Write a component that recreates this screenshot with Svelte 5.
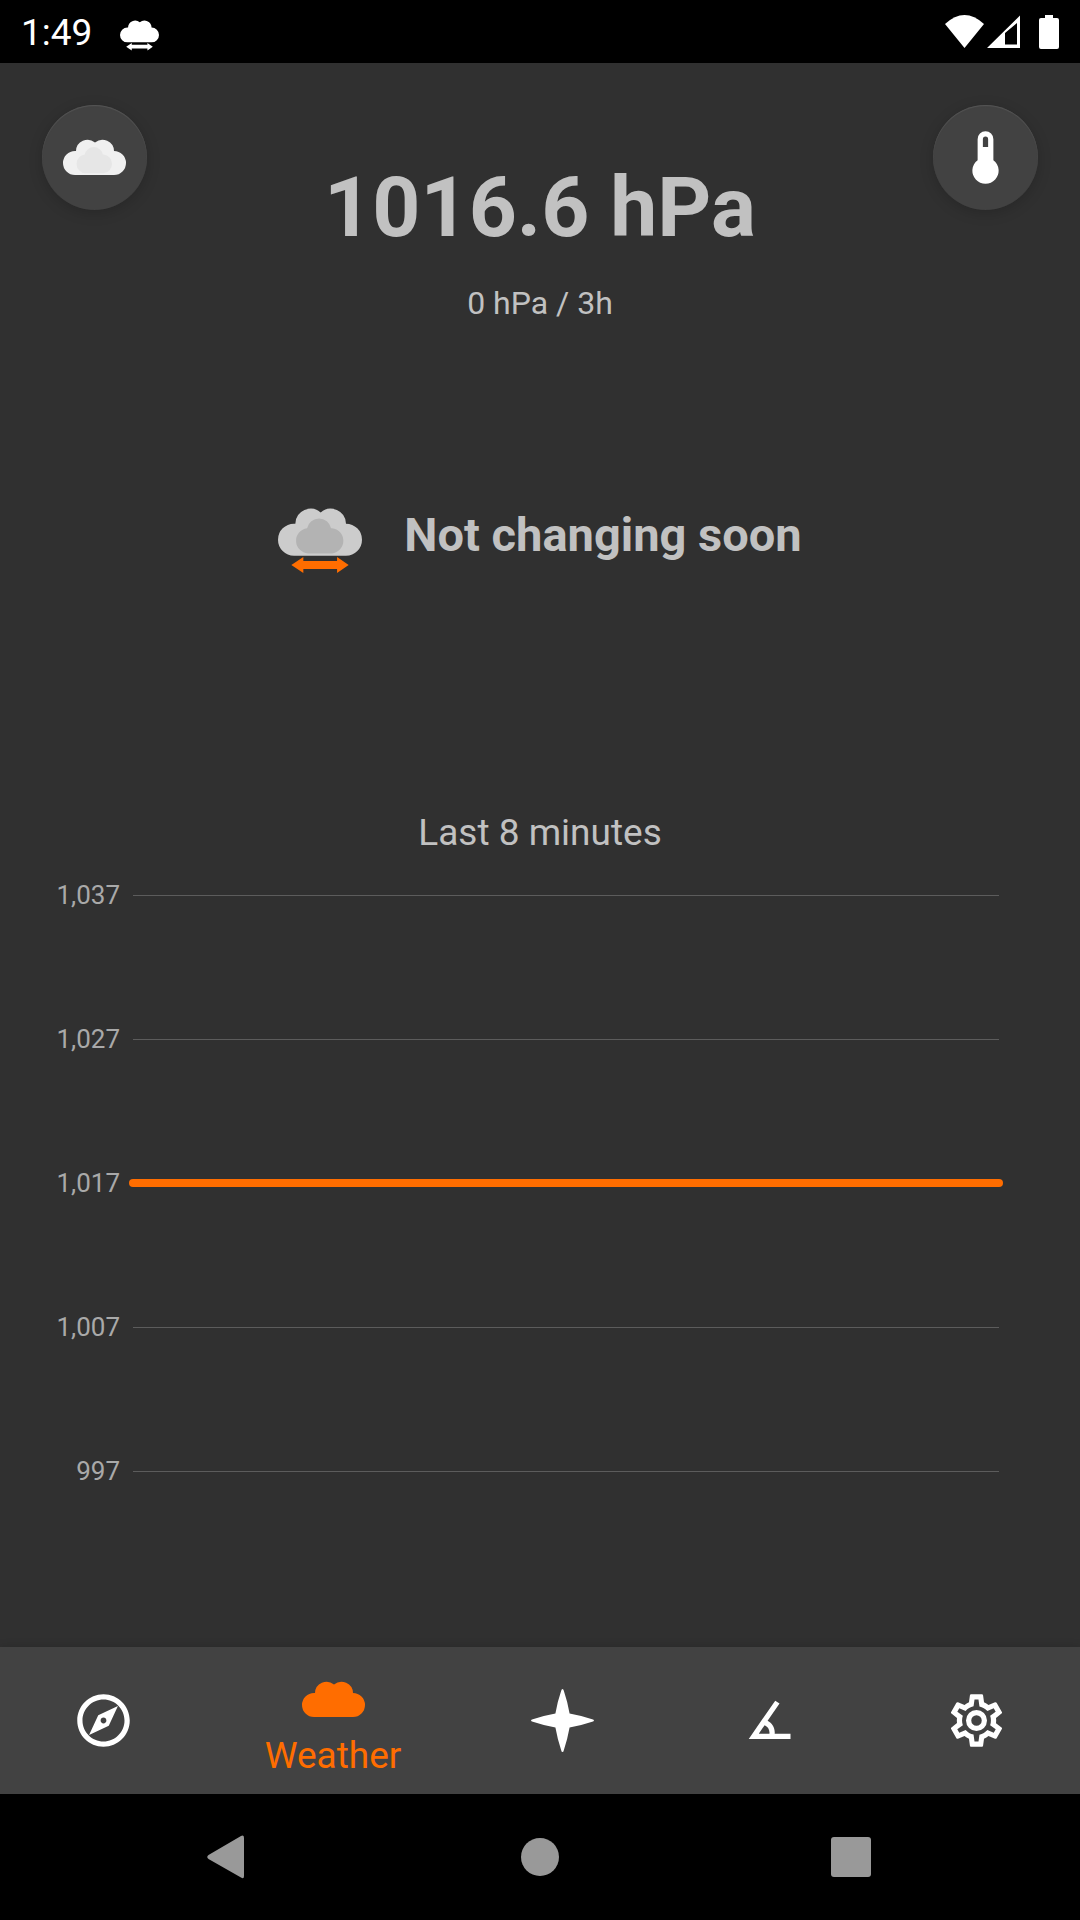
<script>
  const ticks = [
    { label: '1,037' },
    { label: '1,027' },
    { label: '1,017', reading: true },
    { label: '1,007' },
    { label: '997' }
  ];

  const icons = {
    compass:
      'M12 2C6.48 2 2 6.48 2 12s4.48 10 10 10 10-4.48 10-10S17.52 2 12 2zm0 18c-4.41 0-8-3.59-8-8s3.59-8 8-8 8 3.59 8 8-3.59 8-8 8zm-5.5-2.5l7.51-3.49L17.5 6.5 9.99 9.99 6.5 17.5zm5.5-6.6c.61 0 1.1.49 1.1 1.1s-.49 1.1-1.1 1.1-1.1-.49-1.1-1.1.49-1.1 1.1-1.1z',
    star: 'M12 0Q12.35 0 12.5 .7Q13.9 4.8 14.7 9.3Q19.2 10.1 23.3 11.5Q24 11.7 24 12Q24 12.3 23.3 12.5Q19.2 13.9 14.7 14.7Q13.9 19.2 12.5 23.3Q12.35 24 12 24Q11.65 24 11.5 23.3Q10.1 19.2 9.3 14.7Q4.8 13.9 .7 12.5Q0 12.3 0 12Q0 11.7 .7 11.5Q4.8 10.1 9.3 9.3Q10.1 4.8 11.5 .7Q11.65 0 12 0Z',
    angle:
      'M20,19H4.09L14.18,4.43L15.82,5.57L11.28,12.13C12.89,12.96 14,14.62 14,16.54C14,16.7 14,16.85 13.97,17H20V19M7.91,17H11.96C12,16.87 12,16.7 12,16.54C12,15.28 11.24,14.22 10.14,13.78L7.91,17Z',
    cog: 'M12,8A4,4 0 0,1 16,12A4,4 0 0,1 12,16A4,4 0 0,1 8,12A4,4 0 0,1 12,8M12,10A2,2 0 0,0 10,12A2,2 0 0,0 12,14A2,2 0 0,0 14,12A2,2 0 0,0 12,10M10,22C9.75,22 9.54,21.82 9.5,21.58L9.13,18.93C8.5,18.68 7.96,18.34 7.44,17.94L4.95,18.95C4.73,19.03 4.46,18.95 4.34,18.73L2.34,15.27C2.21,15.05 2.27,14.78 2.46,14.63L4.57,12.97L4.5,12L4.57,11L2.46,9.37C2.27,9.22 2.21,8.95 2.34,8.73L4.34,5.27C4.46,5.05 4.73,4.96 4.95,5.05L7.44,6.05C7.96,5.66 8.5,5.32 9.13,5.07L9.5,2.42C9.54,2.18 9.75,2 10,2H14C14.25,2 14.46,2.18 14.5,2.42L14.87,5.07C15.5,5.32 16.04,5.66 16.56,6.05L19.05,5.05C19.27,4.96 19.54,5.05 19.66,5.27L21.66,8.73C21.79,8.95 21.73,9.22 21.54,9.37L19.43,11L19.5,12L19.43,13L21.54,14.63C21.73,14.78 21.79,15.05 21.66,15.27L19.66,18.73C19.54,18.95 19.27,19.04 19.05,18.95L16.56,17.95C16.04,18.34 15.5,18.68 14.87,18.93L14.5,21.58C14.46,21.82 14.25,22 14,22H10M11.25,4L10.88,6.61C9.68,6.86 8.62,7.5 7.85,8.39L5.44,7.35L4.69,8.65L6.8,10.2C6.4,11.37 6.4,12.64 6.8,13.8L4.68,15.36L5.43,16.66L7.86,15.62C8.63,16.5 9.68,17.14 10.87,17.38L11.24,20H12.76L13.13,17.39C14.32,17.14 15.37,16.5 16.14,15.62L18.57,16.66L19.32,15.36L17.2,13.81C17.6,12.64 17.6,11.37 17.2,10.2L19.31,8.65L18.56,7.35L16.15,8.39C15.38,7.5 14.32,6.86 13.12,6.62L12.75,4H11.25Z',
    thermometer:
      'M15,13V5A3,3 0 0,0 9,5V13A5,5 0 1,0 15,13M12,4A1,1 0 0,1 13,5V8H11V5A1,1 0 0,1 12,4Z'
  };

  const tabs = [
    { id: 'compass', name: 'Navigation' },
    { id: 'weather', name: 'Weather' },
    { id: 'star', name: 'Astronomy' },
    { id: 'angle', name: 'Clinometer' },
    { id: 'cog', name: 'Settings' }
  ];

  let current = $state('weather');
</script>

{#snippet glyph(name)}
  <svg class="icon" viewBox="0 0 24 24" aria-hidden="true"><path d={icons[name]} /></svg>
{/snippet}

{#snippet cloud(inner, arrow, top)}
  <svg class="icon" viewBox="0 {top} 63 63" aria-hidden="true">
    <path
      d="M12 49A12 12 0 0 1 12 25H13A11.5 11.5 0 0 1 32 16.6A11.5 11.5 0 0 1 51 25A12 12 0 0 1 51 49Z"
    />
    {#if inner}
      <path
        class="inner"
        d="M22.5 47.3A9.5 9.5 0 0 1 21.8 28.4A9.2 9.2 0 0 1 39.8 28.4H40.5A9.5 9.5 0 0 1 40.5 47.3Z"
      />
    {/if}
    {#if arrow}
      <path class="arrow" d="M10 56L19 50V53H44.3V50L53 56L44.3 62V59H19V62Z" />
    {/if}
  </svg>
{/snippet}

<div class="screen">
  <header class="status">
    <span class="clock">1:49</span>
    <span class="notice">{@render cloud(false, true, 0)}</span>
    <svg class="signals" viewBox="0 0 114 34" aria-hidden="true">
      <path d="M0 9Q19.500 -9 39 9L19.500 33Z" />
      <path fill-rule="evenodd" d="M42 33L75 .5V33ZM60 18V29.500H72V8Z" />
      <path d="M100 0H108V3H112Q114 3 114 5V32Q114 34 112 34H96Q94 34 94 32V5Q94 3 96 3H100Z" />
    </svg>
  </header>

  <main>
    <section class="summary">
      <button class="round pale" aria-label="Barometer">{@render cloud(true, false, 0)}</button>
      <div class="reading">
        <h1>1016.6 hPa</h1>
        <p>0 hPa / 3h</p>
      </div>
      <button class="round" aria-label="Temperature">{@render glyph('thermometer')}</button>
    </section>

    <section class="forecast">
      {@render cloud(true, true, 2)}
      <h2>Not changing soon</h2>
    </section>

    <section class="history">
      <h3>Last 8 minutes</h3>
      <ul>
        {#each ticks as tick}
          <li>
            <span class="tick">{tick.label}</span>
            <span class="rule" class:series={tick.reading}></span>
          </li>
        {/each}
      </ul>
    </section>
  </main>

  <nav class="tabs" aria-label="Tools">
    {#each tabs as tab}
      <button
        class:active={current === tab.id}
        aria-label={tab.name}
        onclick={() => (current = tab.id)}
      >
        {#if tab.id === 'weather'}
          {@render cloud(false, false, 0)}
        {:else}
          {@render glyph(tab.id)}
        {/if}
        {#if current === tab.id}<span>{tab.name}</span>{/if}
      </button>
    {/each}
  </nav>

  <nav class="system" aria-label="System">
    <button aria-label="Back">
      <svg viewBox="0 0 48 48" aria-hidden="true">
        <path d="M36 3Q39 1.500 39 5V43Q39 46.500 36 44.500L3.500 26Q1 24 3.500 22Z" />
      </svg>
    </button>
    <button aria-label="Home">
      <svg viewBox="0 0 48 48" aria-hidden="true"><circle cx="24" cy="24" r="19" /></svg>
    </button>
    <button aria-label="Recent apps">
      <svg viewBox="0 0 48 48" aria-hidden="true">
        <rect x="4" y="4" width="40" height="40" rx="3" />
      </svg>
    </button>
  </nav>
</div>

<style>
  :global(body) {
    margin: 0;
    background: #303030;
  }

  .screen {
    display: flex;
    flex-direction: column;
    min-height: 100vh;
    background: #303030;
    color: #c1c1c1;
    font-family: Roboto, sans-serif;
  }

  h1,
  h2,
  h3,
  p,
  ul {
    margin: 0;
    padding: 0;
  }

  button {
    margin: 0;
    padding: 0;
    border: 0;
    background: none;
    color: inherit;
    font: inherit;
    cursor: pointer;
  }

  svg {
    display: block;
    fill: currentColor;
  }

  .icon {
    width: 63px;
    height: 63px;
  }

  .status {
    display: flex;
    align-items: center;
    box-sizing: border-box;
    height: 63px;
    padding: 0 21px;
    background: #000;
    color: #fff;
  }

  .clock {
    padding-top: 2px;
    font-size: 37px;
    line-height: 43px;
  }

  .notice {
    margin-left: 28px;
  }

  .notice .icon {
    width: 39px;
    height: 39px;
  }

  .signals {
    width: 114px;
    height: 34px;
    margin-left: auto;
  }

  main {
    flex: 1;
    padding: 42px;
  }

  .summary {
    display: grid;
    grid-template-columns: 105px 1fr 105px;
    align-items: start;
  }

  .round {
    display: grid;
    place-items: center;
    width: 105px;
    height: 105px;
    border-radius: 50%;
    background: #424242;
    color: #fff;
    box-shadow:
      inset 0 1px 1px #555,
      0 3px 14px rgba(0, 0, 0, 0.18);
  }

  .pale {
    color: #f0f0f0;
  }

  .pale .inner {
    fill: #e6e6e6;
  }

  .reading {
    padding-top: 54px;
    text-align: center;
  }

  h1 {
    font-size: 84px;
    line-height: 98px;
  }

  .reading p {
    margin-top: 27px;
    font-size: 32px;
    line-height: 38px;
  }

  .forecast {
    display: flex;
    justify-content: center;
    align-items: center;
    gap: 42px;
    margin-top: 171px;
  }

  .forecast .icon {
    width: 84px;
    height: 84px;
    color: #ccc;
  }

  .inner {
    fill: #b3b3b3;
  }

  .forecast .arrow {
    fill: #ff6d00;
  }

  h2 {
    font-size: 47px;
    line-height: 56px;
  }

  .history {
    margin-top: 234px;
  }

  h3 {
    font-size: 37px;
    font-weight: 400;
    line-height: 43px;
    text-align: center;
  }

  ul {
    display: grid;
    gap: 112px;
    margin-top: 25px;
    padding-right: 39px;
    list-style: none;
  }

  li {
    display: grid;
    grid-template-columns: 78px 1fr;
    column-gap: 13px;
    align-items: center;
    height: 32px;
  }

  .tick {
    color: #a9a9a9;
    font-size: 26px;
    line-height: 32px;
    text-align: right;
  }

  .rule {
    height: 1px;
    background: #5c5c5c;
  }

  .series {
    height: 8px;
    margin: 0 -4px;
    border-radius: 4px;
    background: #ff6d00;
  }

  .tabs {
    display: flex;
    height: 147px;
    background: #424242;
    color: #fff;
    box-shadow: 0 -1px 8px rgba(0, 0, 0, 0.12);
  }

  .tabs button {
    display: flex;
    flex: 23 1 0;
    flex-direction: column;
    align-items: center;
    justify-content: center;
    gap: 3px;
  }

  .tabs .active {
    flex-grow: 28;
    padding-top: 3px;
    color: #ff6d00;
  }

  .tabs span {
    font-size: 37px;
    line-height: 43px;
  }

  .system {
    display: grid;
    grid-template-columns: repeat(3, 1fr);
    height: 126px;
    padding: 0 74px;
    background: #000;
    color: #999;
  }

  .system button {
    display: grid;
    place-items: center;
  }

  .system svg {
    width: 48px;
    height: 48px;
  }
</style>
